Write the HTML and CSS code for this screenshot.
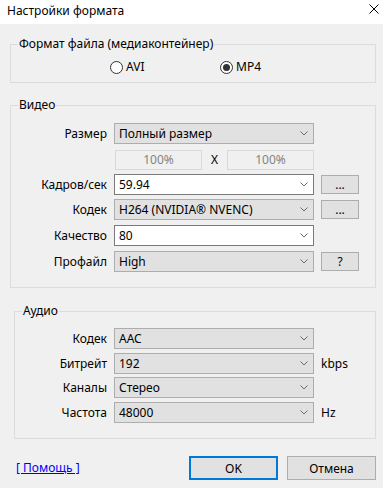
FILE: index.html
```html
<!DOCTYPE html>
<html lang="ru">
<head>
    <meta charset="UTF-8">
    <title>Настройки формата</title>
    <link rel="stylesheet" href="styles.css">
</head>
<body>
    <div class="dialog">
        <div class="titlebar">
            <span class="title">Настройки формата</span>
            <svg class="close" width="10" height="10" viewBox="0 0 10 10"><path d="M0.5 0.5 L9.5 9.5 M9.5 0.5 L0.5 9.5" stroke="#000" stroke-width="1" fill="none"/></svg>
        </div>

        <div class="content">
            <div class="group group-format">
                <div class="legend">Формат файла (медиаконтейнер)</div>
                <div class="radios">
                    <label class="radio"><span class="dot"></span>AVI</label>
                    <label class="radio checked"><span class="dot"></span>MP4</label>
                </div>
            </div>

            <div class="group group-video">
                <div class="legend">Видео</div>
                <div class="form form-video">
                    <span class="lbl">Размер</span>
                    <div class="combo">Полный размер<svg class="chev" width="8" height="5" viewBox="0 0 8 5"><path d="M0.5 0.5 L4 4 L7.5 0.5"/></svg></div>
                    <span></span>

                    <span></span>
                    <div class="size">
                        <span class="edit">100%</span>
                        <span class="times">X</span>
                        <span class="edit">100%</span>
                    </div>
                    <span></span>

                    <span class="lbl">Кадров/сек</span>
                    <div class="combo white">59.94<svg class="chev" width="8" height="5" viewBox="0 0 8 5"><path d="M0.5 0.5 L4 4 L7.5 0.5"/></svg></div>
                    <button class="small">...</button>

                    <span class="lbl">Кодек</span>
                    <div class="combo">H264 (NVIDIA® NVENC)<svg class="chev" width="8" height="5" viewBox="0 0 8 5"><path d="M0.5 0.5 L4 4 L7.5 0.5"/></svg></div>
                    <button class="small">...</button>

                    <span class="lbl">Качество</span>
                    <div class="combo white">80<svg class="chev" width="8" height="5" viewBox="0 0 8 5"><path d="M0.5 0.5 L4 4 L7.5 0.5"/></svg></div>
                    <span></span>

                    <span class="lbl">Профайл</span>
                    <div class="combo">High<svg class="chev" width="8" height="5" viewBox="0 0 8 5"><path d="M0.5 0.5 L4 4 L7.5 0.5"/></svg></div>
                    <button class="small">?</button>
                </div>
            </div>

            <div class="group group-audio">
                <div class="legend">Аудио</div>
                <div class="form form-audio">
                    <span class="lbl">Кодек</span>
                    <div class="combo">AAC<svg class="chev" width="8" height="5" viewBox="0 0 8 5"><path d="M0.5 0.5 L4 4 L7.5 0.5"/></svg></div>
                    <span></span>

                    <span class="lbl">Битрейт</span>
                    <div class="combo">192<svg class="chev" width="8" height="5" viewBox="0 0 8 5"><path d="M0.5 0.5 L4 4 L7.5 0.5"/></svg></div>
                    <span class="unit">kbps</span>

                    <span class="lbl">Каналы</span>
                    <div class="combo">Стерео<svg class="chev" width="8" height="5" viewBox="0 0 8 5"><path d="M0.5 0.5 L4 4 L7.5 0.5"/></svg></div>
                    <span></span>

                    <span class="lbl">Частота</span>
                    <div class="combo">48000<svg class="chev" width="8" height="5" viewBox="0 0 8 5"><path d="M0.5 0.5 L4 4 L7.5 0.5"/></svg></div>
                    <span class="unit">Hz</span>
                </div>
            </div>

            <div class="footer">
                <a href="#" class="help">[ Помощь ]</a>
                <div class="actions">
                    <button class="btn default">OK</button>
                    <button class="btn">Отмена</button>
                </div>
            </div>
        </div>
    </div>
</body>
</html>
```

FILE: styles.css
```css
body {
    margin: 0;
    font-family: "Noto Sans", Arial, sans-serif;
    font-size: 12px;
    line-height: 16px;
    color: #000;
    background-color: #f0f0f0;
}
.dialog {
    width: 383px;
    height: 488px;
    overflow: hidden;
}
.titlebar {
    height: 24px;
    background-color: #ffffff;
    display: flex;
    align-items: center;
    justify-content: space-between;
    padding: 0 4px 2px 7px;
    box-sizing: border-box;
}
.close {
    margin-top: -4px;
}
.content {
    padding: 0 7px 0 10px;
}
.group {
    border: 1px solid #dcdcdc;
}
.legend {
    width: fit-content;
    margin: -9px 0 0 7px;
    padding: 0 1px;
    background-color: #f0f0f0;
}
.group-format {
    margin-top: 20px;
}
.radios {
    display: flex;
    align-items: center;
    margin: 7px 0 7px 99px;
    height: 16px;
}
.radio {
    display: flex;
    align-items: center;
    gap: 3px;
    width: 110px;
}
.dot {
    width: 13px;
    height: 13px;
    box-sizing: border-box;
    border: 1px solid #333;
    border-radius: 50%;
    background-color: #fff;
    display: flex;
    align-items: center;
    justify-content: center;
}
.radio.checked .dot::after {
    content: "";
    width: 7px;
    height: 7px;
    border-radius: 50%;
    background-color: #333;
}
.group-video {
    margin-top: 22px;
}
.group-audio {
    margin: 23px 0 0 4px;
}
.form {
    display: grid;
    column-gap: 7px;
    align-items: start;
}
.form-video {
    grid-template-columns: 96px 200px 38px;
    grid-template-rows: 26px 25px 25px 26px 26px 21px;
    margin: 10px 0 15px;
}
.form-audio {
    grid-template-columns: 92px 200px 38px;
    grid-template-rows: 25px 24px 25px 21px;
    margin: 9px 0 15px;
}
.lbl {
    text-align: right;
    line-height: 21px;
}
.unit {
    line-height: 21px;
}
.combo {
    height: 21px;
    box-sizing: border-box;
    border: 1px solid #adadad;
    background-color: #e1e1e1;
    display: flex;
    align-items: center;
    justify-content: space-between;
    padding: 0 5px 0 4px;
}
.combo.white {
    background-color: #ffffff;
    border-color: #7a7a7a;
}
.chev path {
    fill: none;
    stroke: #6b6b6b;
}
.size {
    display: flex;
    align-items: center;
    justify-content: space-between;
    height: 21px;
    padding-left: 1px;
}
.edit {
    width: 87px;
    height: 20px;
    box-sizing: border-box;
    border: 1px solid #d9d9d9;
    color: #838383;
    text-align: center;
    line-height: 18px;
}
.times {
    width: 24px;
    text-align: center;
}
button {
    font-family: inherit;
    font-size: 12px;
    color: #000;
    background-color: #e1e1e1;
    border: 1px solid #adadad;
    padding: 0;
}
.small {
    width: 38px;
    height: 19px;
    margin-top: 1px;
    line-height: 15px;
}
.footer {
    display: flex;
    align-items: center;
    justify-content: space-between;
    margin-top: 17px;
    padding-left: 6px;
}
.help {
    color: #0000ff;
}
.actions {
    display: flex;
    gap: 9px;
}
.btn {
    width: 89px;
    height: 24px;
}
.btn.default {
    border: 2px solid #0078d7;
}
```
